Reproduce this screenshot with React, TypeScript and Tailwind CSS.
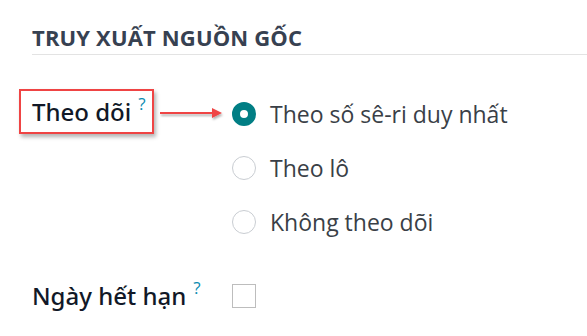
const Help = () => (
  <sup className="ml-[7px] text-[17px] font-medium text-[#0a8bb0] relative -top-[8px]">?</sup>
);

const Radio = ({ checked, label }: { checked?: boolean; label: string }) => (
  <div className="flex items-center h-[54px]">
    {checked ? (
      <span className="w-[24px] h-[24px] rounded-full border-[8px] border-[#017e84] bg-white" />
    ) : (
      <span className="w-[24px] h-[24px] rounded-full border-[1.5px] border-[#c9cdd2] bg-white" />
    )}
    <span className="ml-[14px] text-[23px] text-[#3a3f47]">{label}</span>
  </div>
);

export default function App() {
  return (
    <div
      className="w-[587px] h-[336px] bg-white relative overflow-hidden pl-[32px] pt-[22px]"
      style={{ fontFamily: '"Open Sans", "Noto Sans", sans-serif' }}
    >
      <div className="text-[22px] font-bold text-[#374151] tracking-[0.15px] leading-[30px]">
        TRUY XUẤT NGUỒN GỐC
      </div>
      <div className="h-px bg-[#e3e3e3] mt-[2px] -mr-[10px]" />

      <div className="flex mt-[34px]">
        <div className="w-[200px]">
          <div className="inline-flex items-center -ml-[13px] pl-[11px] pr-[6px] h-[45px] border-2 border-[#ef4444] shadow-[2px_3px_4px_rgba(0,0,0,0.3)]">
            <span className="text-[24px] font-medium text-[#111827] [font-family:'Noto_Sans',sans-serif]">Theo dõi</span>
            <Help />
          </div>
        </div>
        <div className="-mt-[2px]">
          <Radio checked label="Theo số sê-ri duy nhất" />
          <Radio label="Theo lô" />
          <Radio label="Không theo dõi" />
        </div>
      </div>

      <div className="flex items-center mt-[29px]">
        <div className="w-[200px] flex items-center">
          <span className="text-[24px] font-medium text-[#111827] [font-family:'Noto_Sans',sans-serif]">Ngày hết hạn</span>
          <Help />
        </div>
        <span className="w-[24px] h-[24px] border-[1.5px] border-[#bdbdbd] bg-white" />
      </div>

      <svg className="absolute left-[158px] top-[105px]" width="70" height="18" viewBox="0 0 70 18">
        <defs>
          <filter id="sh" x="-10%" y="-50%" width="130%" height="250%">
            <feDropShadow dx="1" dy="2" stdDeviation="1.2" floodColor="#000" floodOpacity="0.3" />
          </filter>
        </defs>
        <g filter="url(#sh)">
          <line x1="2" y1="8" x2="56" y2="8" stroke="#ef4444" strokeWidth="2" />
          <path d="M54 3 L64 8 L54 13 Z" fill="#ef4444" />
        </g>
      </svg>
    </div>
  );
}
